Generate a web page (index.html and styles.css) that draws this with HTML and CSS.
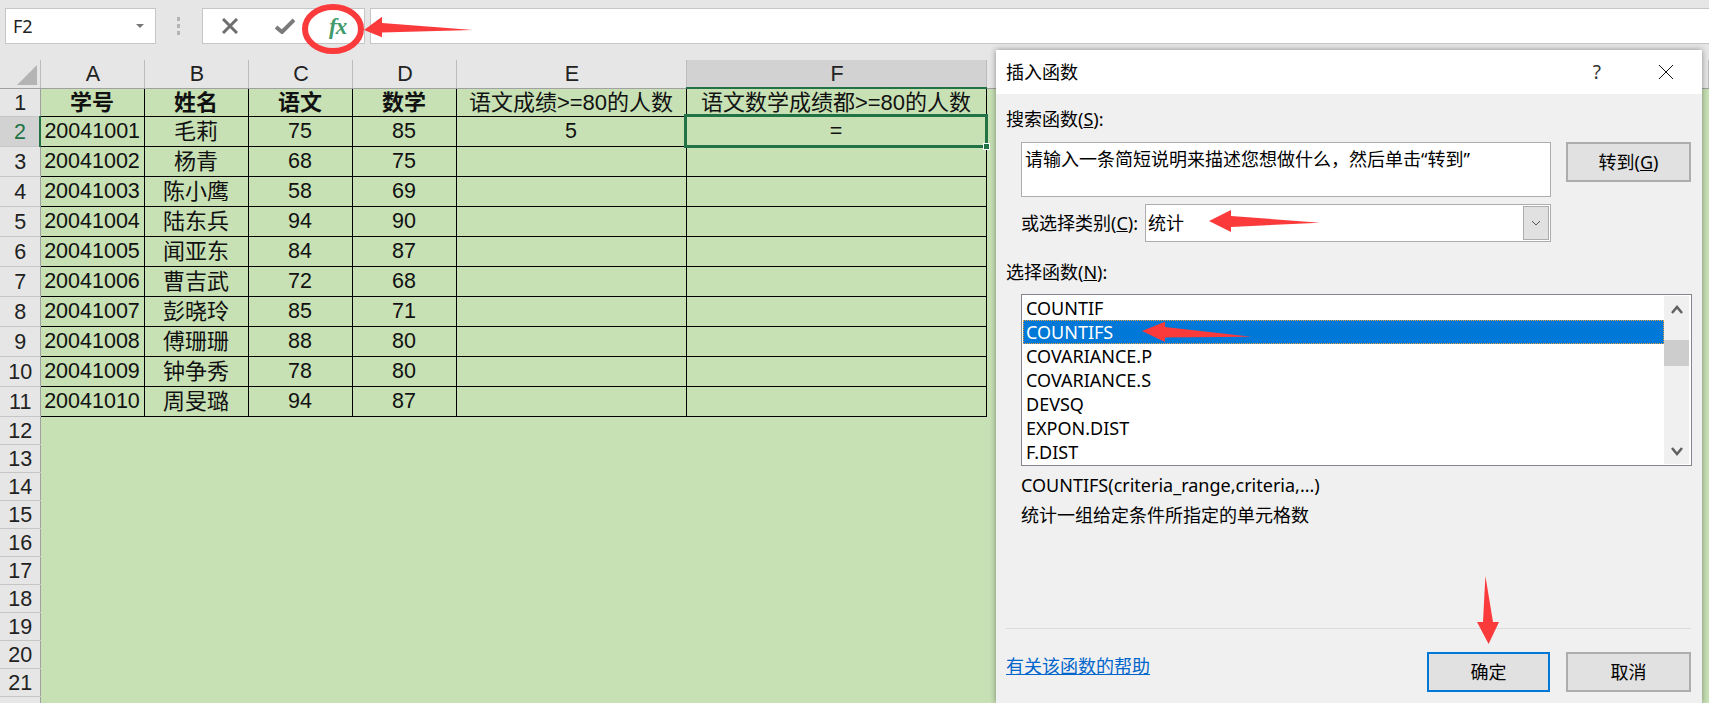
FILE: index.html
```html
<!DOCTYPE html>
<html lang="zh-CN">
  <head>
    <meta charset="UTF-8" />
    <title>插入函数</title>
    <link rel="stylesheet" href="styles.css">
  </head>
  <body>
    <div class="app">
      <!-- formula bar -->
      <div class="formula-bar">
        <div class="name-box">
          <span>F2</span>
          <span class="caret"></span>
        </div>
        <div class="grip"><i></i><i></i><i></i></div>
        <div class="fx-group">
          <svg class="icon-x" width="16" height="16" viewBox="0 0 16 16">
            <path d="M1 1 L15 15 M15 1 L1 15" />
          </svg>
          <svg class="icon-check" width="20" height="16" viewBox="0 0 20 16">
            <path d="M1 9 L7 14 L19 2" />
          </svg>
          <span class="fx-text">fx</span>
        </div>
        <div class="formula-input"></div>
      </div>

      <!-- sheet -->
      <table class="sheet">
        <colgroup>
          <col class="c-head" />
          <col class="c-std" />
          <col class="c-std" />
          <col class="c-std" />
          <col class="c-std" />
          <col class="c-e" />
          <col class="c-f" />
          <col />
        </colgroup>
        <tr class="col-row">
          <th class="corner">
            <svg width="20" height="20" viewBox="0 0 20 20"><path d="M0 20 L20 0 L20 20 Z" /></svg>
          </th>
          <th>A</th><th>B</th><th>C</th><th>D</th><th>E</th><th class="col-active">F</th><th></th>
        </tr>
        <tr class="row-first">
          <th class="row-num">1</th>
          <td class="cell bold">学号</td><td class="cell bold">姓名</td><td class="cell bold">语文</td><td class="cell bold">数学</td>
          <td class="cell cjk">语文成绩&gt;=80的人数</td><td class="cell cjk">语文数学成绩都&gt;=80的人数</td>
          <td class="blank" rowspan="22"></td>
        </tr>
        <tr class="row-data">
          <th class="row-num row-active">2</th>
          <td class="cell">20041001</td><td class="cell cjk">毛莉</td><td class="cell">75</td><td class="cell">85</td><td class="cell">5</td>
          <td class="cell cell-active">=<span class="handle"></span></td>
        </tr>
        <tr class="row-data">
          <th class="row-num">3</th>
          <td class="cell">20041002</td><td class="cell cjk">杨青</td><td class="cell">68</td><td class="cell">75</td><td class="cell"></td><td class="cell"></td>
        </tr>
        <tr class="row-data">
          <th class="row-num">4</th>
          <td class="cell">20041003</td><td class="cell cjk">陈小鹰</td><td class="cell">58</td><td class="cell">69</td><td class="cell"></td><td class="cell"></td>
        </tr>
        <tr class="row-data">
          <th class="row-num">5</th>
          <td class="cell">20041004</td><td class="cell cjk">陆东兵</td><td class="cell">94</td><td class="cell">90</td><td class="cell"></td><td class="cell"></td>
        </tr>
        <tr class="row-data">
          <th class="row-num">6</th>
          <td class="cell">20041005</td><td class="cell cjk">闻亚东</td><td class="cell">84</td><td class="cell">87</td><td class="cell"></td><td class="cell"></td>
        </tr>
        <tr class="row-data">
          <th class="row-num">7</th>
          <td class="cell">20041006</td><td class="cell cjk">曹吉武</td><td class="cell">72</td><td class="cell">68</td><td class="cell"></td><td class="cell"></td>
        </tr>
        <tr class="row-data">
          <th class="row-num">8</th>
          <td class="cell">20041007</td><td class="cell cjk">彭晓玲</td><td class="cell">85</td><td class="cell">71</td><td class="cell"></td><td class="cell"></td>
        </tr>
        <tr class="row-data">
          <th class="row-num">9</th>
          <td class="cell">20041008</td><td class="cell cjk">傅珊珊</td><td class="cell">88</td><td class="cell">80</td><td class="cell"></td><td class="cell"></td>
        </tr>
        <tr class="row-data">
          <th class="row-num">10</th>
          <td class="cell">20041009</td><td class="cell cjk">钟争秀</td><td class="cell">78</td><td class="cell">80</td><td class="cell"></td><td class="cell"></td>
        </tr>
        <tr class="row-data">
          <th class="row-num">11</th>
          <td class="cell">20041010</td><td class="cell cjk">周旻璐</td><td class="cell">94</td><td class="cell">87</td><td class="cell"></td><td class="cell"></td>
        </tr>
        <tr class="row-empty"><th class="row-num">12</th><td class="blank" colspan="6" rowspan="11"></td></tr>
        <tr class="row-empty"><th class="row-num">13</th></tr>
        <tr class="row-empty"><th class="row-num">14</th></tr>
        <tr class="row-empty"><th class="row-num">15</th></tr>
        <tr class="row-empty"><th class="row-num">16</th></tr>
        <tr class="row-empty"><th class="row-num">17</th></tr>
        <tr class="row-empty"><th class="row-num">18</th></tr>
        <tr class="row-empty"><th class="row-num">19</th></tr>
        <tr class="row-empty"><th class="row-num">20</th></tr>
        <tr class="row-empty"><th class="row-num">21</th></tr>
        <tr class="row-empty"><th class="row-num"></th></tr>
      </table>

      <!-- insert function dialog -->
      <div class="dialog">
        <div class="dialog-title">
          <span>插入函数</span>
          <span class="help">?</span>
          <svg class="close" width="16" height="16" viewBox="0 0 16 16"><path d="M1 1 L15 15 M15 1 L1 15" /></svg>
        </div>
        <div class="dialog-body">
          <div class="label first">搜索函数(<u>S</u>):</div>
          <div class="search-row">
            <div class="search-box">请输入一条简短说明来描述您想做什么，然后单击“转到”</div>
            <div class="btn btn-go">转到(<u>G</u>)</div>
          </div>
          <div class="category-row">
            <span>或选择类别(<u>C</u>):</span>
            <div class="select">
              <span>统计</span>
              <div class="select-btn">
                <svg width="10" height="6" viewBox="0 0 10 6"><path d="M1 1 L5 5 L9 1" /></svg>
              </div>
            </div>
          </div>
          <div class="label second">选择函数(<u>N</u>):</div>
          <div class="list">
            <div class="list-items">
              <div class="item">COUNTIF</div>
              <div class="item item-selected">COUNTIFS</div>
              <div class="item">COVARIANCE.P</div>
              <div class="item">COVARIANCE.S</div>
              <div class="item">DEVSQ</div>
              <div class="item">EXPON.DIST</div>
              <div class="item">F.DIST</div>
            </div>
            <div class="scrollbar">
              <svg class="arrow" width="12" height="24" viewBox="0 0 12 24"><path d="M1 17 L6 11 L11 17" /></svg>
              <div class="thumb"></div>
              <svg class="arrow" width="12" height="24" viewBox="0 0 12 24"><path d="M1 8 L6 14 L11 8" /></svg>
            </div>
          </div>
          <div class="signature">COUNTIFS(criteria_range,criteria,...)</div>
          <div class="description">统计一组给定条件所指定的单元格数</div>
        </div>
        <div class="dialog-footer">
          <a class="help-link">有关该函数的帮助</a>
          <div class="btn btn-ok">确定</div>
          <div class="btn btn-cancel">取消</div>
        </div>
      </div>

      <!-- red annotations drawn over the screenshot -->
      <svg class="marks" width="1709" height="703" viewBox="0 0 1709 703">
        <ellipse cx="333" cy="29" rx="28" ry="22" />
        <polygon points="364,30 382,16.7 382,23 473,30 382,32.5 382,37.3" />
        <polygon points="1209,221 1231,210 1231,216 1320,222.7 1231,227 1231,232" />
        <polygon points="1142,331 1165,321.7 1165,327 1251.5,336.7 1165,337.5 1165,342" />
        <polygon points="1488.6,644 1499,622 1493,622 1485.4,576 1483,622 1477,622" />
      </svg>
    </div>
  </body>
</html>
```

FILE: styles.css
```css
* {
  box-sizing: border-box;
}
html,
body {
  margin: 0;
  height: 100%;
  overflow: hidden;
}
body {
  font-family: "Noto Sans", "Noto Sans CJK SC", sans-serif;
  color: #000;
}
.app {
  position: relative;
  width: 1709px;
  height: 703px;
  overflow: hidden;
  background-color: #e6e6e6;
}

/* formula bar */
.formula-bar {
  display: flex;
  align-items: stretch;
  height: 60px;
  padding: 8px 0 16px 5px;
  background-color: #e6e6e6;
}
.name-box {
  display: flex;
  align-items: center;
  justify-content: space-between;
  width: 151px;
  padding: 0 11px 0 7px;
  background-color: #fff;
  border: 1px solid #c6c6c6;
  font-size: 18px;
  color: #222;
}
.caret {
  width: 0;
  height: 0;
  border-left: 4px solid transparent;
  border-right: 4px solid transparent;
  border-top: 4px solid #777;
}
.grip {
  display: flex;
  flex-direction: column;
  justify-content: center;
  gap: 3px;
  width: 46px;
  padding-left: 21px;
}
.grip i {
  display: block;
  width: 3px;
  height: 4px;
  background-color: #b4b4b4;
}
.fx-group {
  display: flex;
  align-items: center;
  width: 163px;
  padding-left: 19px;
  background-color: #fff;
  border: 1px solid #c6c6c6;
}
.icon-x {
  fill: none;
  stroke: #6e6e6e;
  stroke-width: 3;
}
.icon-check {
  margin-left: 37px;
  fill: none;
  stroke: #7b7b7b;
  stroke-width: 4;
}
.fx-text {
  margin-left: 34px;
  font-family: "Liberation Serif", serif;
  font-style: italic;
  font-weight: bold;
  font-size: 23px;
  letter-spacing: -1px;
  line-height: 1;
  color: #3f9a6c;
}
.formula-input {
  flex: 1;
  margin-left: 5px;
  background-color: #fff;
  border: 1px solid #c6c6c6;
  border-right: 0;
}

/* sheet */
.sheet {
  table-layout: fixed;
  border-collapse: collapse;
  width: 1709px;
  font-family: "Liberation Sans", "Noto Sans CJK SC", sans-serif;
  font-size: 21.5px;
  background-color: #c7e0b4;
}
.c-head {
  width: 40px;
}
.c-std {
  width: 104px;
}
.c-e {
  width: 230px;
}
.c-f {
  width: 300px;
}
.sheet th {
  padding: 0;
  font-weight: normal;
  background-color: #e6e6e6;
}
.col-row {
  height: 28px;
}
.col-row th {
  padding: 2px 0 0 2px;
  border-right: 1px solid #bcbcbc;
  border-bottom: 1px solid #a0a0a0;
  color: #222;
}
.sheet .corner {
  padding: 0;
  text-align: right;
  vertical-align: bottom;
}
.corner svg {
  display: block;
  margin: 0 3px 3px auto;
  fill: #b4b4b4;
}
.sheet .col-active {
  background-color: #d2d2d2;
  border-bottom: 2px solid #217346;
}
.row-first {
  height: 28px;
}
.row-data {
  height: 30px;
}
.row-empty {
  height: 28px;
}
.sheet .row-num {
  padding: 3px 0 0 1px;
  line-height: 1;
  border-right: 1px solid #a0a0a0;
  border-bottom: 1px solid #c6c6c6;
  color: #222;
}
.sheet .row-active {
  background-color: #d2d2d2;
  border-right: 2px solid #217346;
  color: #217346;
}
.cell {
  padding: 2px 0 0;
  border: 1px solid #000;
  text-align: center;
  white-space: nowrap;
  line-height: 1;
  color: #111;
}
.cjk {
  font-size: 22px;
}
.bold {
  font-size: 22px;
  font-weight: bold;
}
.blank {
  background-color: #c7e0b4;
  padding: 0;
}
.cell-active {
  position: relative;
  outline: 3px solid #217346;
  outline-offset: -1px;
}
.handle {
  position: absolute;
  right: -4px;
  bottom: -4px;
  width: 7px;
  height: 7px;
  background-color: #217346;
  border: 1px solid #fff;
}

/* dialog */
.dialog {
  position: absolute;
  left: 996px;
  top: 50px;
  width: 706px;
  height: 653px;
  display: flex;
  flex-direction: column;
  background-color: #f0f0f0;
  font-size: 18px;
  line-height: 24px;
  box-shadow: 0 0 6px rgba(0, 0, 0, 0.4);
}
.dialog-title {
  display: flex;
  align-items: center;
  height: 44px;
  padding-left: 10px;
  background-color: #fff;
}
.help {
  margin-left: auto;
  font-size: 19px;
  color: #333;
}
.close {
  margin: 0 28px 0 57px;
  fill: none;
  stroke: #111;
  stroke-width: 1;
}
.dialog-body {
  flex: 1;
  padding: 0 10px 0 25px;
}
.label {
  margin-left: -15px;
}
.label.first {
  margin-top: 13px;
}
.label.second {
  margin-top: 18px;
}
.search-row {
  display: flex;
  align-items: flex-start;
  gap: 15px;
  margin-top: 11px;
}
.search-box {
  width: 530px;
  height: 55px;
  padding: 4px 3px;
  background-color: #fff;
  border: 1px solid #adadad;
}
.btn {
  display: flex;
  align-items: center;
  justify-content: center;
  height: 40px;
  background-color: #e1e1e1;
  border: 2px solid #adadad;
}
.btn-go {
  width: 125px;
}
.category-row {
  display: flex;
  align-items: center;
  gap: 5px;
  margin-top: 7px;
}
.select {
  display: flex;
  align-items: center;
  justify-content: space-between;
  width: 406px;
  height: 38px;
  margin-left: auto;
  margin-right: 141px;
  padding: 0 1px 0 2px;
  background-color: #fff;
  border: 1px solid #adadad;
}
.select-btn {
  display: flex;
  align-items: center;
  justify-content: center;
  width: 26px;
  height: 34px;
  background-color: #e1e1e1;
  border: 1px solid #adadad;
}
.select-btn svg {
  fill: none;
  stroke: #555;
  stroke-width: 1;
}
.list {
  display: flex;
  height: 172px;
  margin-top: 10px;
  padding: 1px 2px 1px 1px;
  background-color: #fff;
  border: 1px solid #828790;
}
.list-items {
  flex: 1;
}
.item {
  height: 24px;
  padding-left: 3px;
  white-space: nowrap;
}
.item-selected {
  background-color: #0078d7;
  color: #fff;
  outline: 1px dotted #e8a040;
  outline-offset: -1px;
}
.scrollbar {
  display: flex;
  flex-direction: column;
  align-items: center;
  width: 25px;
  background-color: #f0f0f0;
}
.arrow {
  flex: none;
  fill: none;
  stroke: #606060;
  stroke-width: 2.5;
}
.thumb {
  flex: none;
  width: 100%;
  height: 26px;
  margin: 20px 0 auto;
  background-color: #cdcdcd;
}
.signature {
  margin-top: 7px;
}
.description {
  margin-top: 6px;
}
.dialog-footer {
  display: flex;
  align-items: flex-start;
  gap: 16px;
  height: 75px;
  margin: 0 11px 0 10px;
  padding-top: 23px;
  border-top: 1px solid #dcdcdc;
}
.help-link {
  margin: 2px auto 0 0;
  color: #0066cc;
  text-decoration: underline;
}
.btn-ok {
  width: 123px;
  background-color: #e1e1e1;
  border-color: #0078d7;
}
.btn-cancel {
  width: 125px;
}

/* annotations */
.marks {
  position: absolute;
  left: 0;
  top: 0;
  pointer-events: none;
}
.marks polygon {
  fill: #fb3a3c;
}
.marks ellipse {
  fill: none;
  stroke: #fb3a3c;
  stroke-width: 6;
}
```
